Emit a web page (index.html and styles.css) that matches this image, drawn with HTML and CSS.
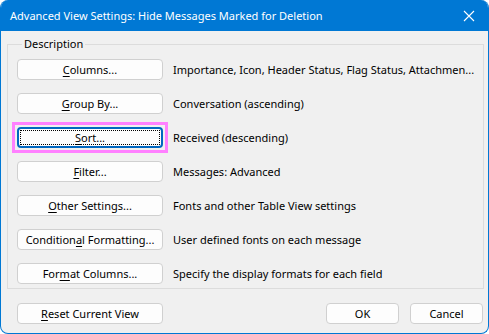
FILE: index.html
```html
<!DOCTYPE html>
<html>
<head>
<meta charset="utf-8">
<link rel="stylesheet" href="styles.css">
</head>
<body>
<div class="window">
  <div class="titlebar">
    <span class="title">Advanced View Settings: Hide Messages Marked for Deletion</span>
    <svg class="close" width="12" height="12" viewBox="0 0 12 12"><path d="M1 1 L11 11 M11 1 L1 11" stroke="#fff" stroke-width="1.1" fill="none"/></svg>
  </div>
  <div class="content">
    <fieldset class="group">
      <legend class="legend">Description</legend>
      <div class="row"><button class="btn"><u>C</u>olumns...</button><span class="desc">Importance, Icon, Header Status, Flag Status, Attachmen...</span></div>
      <div class="row"><button class="btn"><u>G</u>roup By...</button><span class="desc">Conversation (ascending)</span></div>
      <div class="row"><span class="highlight"><button class="btn focused"><span class="focusring"><u>S</u>ort...</span></button></span><span class="desc">Received (descending)</span></div>
      <div class="row"><button class="btn"><u>F</u>ilter...</button><span class="desc">Messages: Advanced</span></div>
      <div class="row"><button class="btn"><u>O</u>ther Settings...</button><span class="desc">Fonts and other Table View settings</span></div>
      <div class="row"><button class="btn">Condition<u>a</u>l Formatting...</button><span class="desc">User defined fonts on each message</span></div>
      <div class="row"><button class="btn">For<u>m</u>at Columns...</button><span class="desc">Specify the display formats for each field</span></div>
    </fieldset>
    <div class="footer">
      <button class="btn"><u>R</u>eset Current View</button>
      <div class="spacer"></div>
      <button class="btn small">OK</button>
      <button class="btn small">Cancel</button>
    </div>
  </div>
</div>
</body>
</html>
```
FILE: styles.css
```css
html, body {
  margin: 0;
  padding: 0;
  background: #ffffff;
}
.window {
  width: 489px;
  height: 334px;
  box-sizing: border-box;
  border: 1px solid #0078d4;
  border-top: none;
  border-radius: 8px;
  background: #f0f0f0;
  overflow: hidden;
  font-family: "Noto Sans", "Segoe UI", sans-serif;
  font-size: 11px;
  color: #000;
}
.titlebar {
  height: 31px;
  background: #0078d4;
  display: flex;
  align-items: center;
  padding: 0 10px 0 9px;
  color: #fff;
}
.title {
  flex: 1;
  font-size: 11px;
  padding-bottom: 1px;
}
.close {
  margin-right: 3px;
}
.content {
  padding: 5px 5px 0 6px;
}
.group {
  margin: 0;
  border: 1px solid #dcdcdc;
  padding: 7px 9px 4px 9px;
  display: flex;
  flex-direction: column;
  gap: 13px;
}
.legend {
  padding: 0 2px;
  margin-left: 5px;
  line-height: 16px;
}
.row {
  display: flex;
  align-items: center;
  height: 21px;
}
.btn {
  width: 146px;
  height: 21px;
  box-sizing: border-box;
  background: #fdfdfd;
  border: 1px solid #d0d0d0;
  border-radius: 4px;
  font-family: inherit;
  font-size: 11px;
  color: #000;
  padding: 0;
  display: flex;
  align-items: center;
  justify-content: center;
  line-height: 15px;
}
.btn u {
  text-underline-offset: 2px;
}
.desc {
  margin-left: 10px;
  white-space: nowrap;
}
.highlight {
  display: flex;
  margin: -5px;
  padding: 2px;
  border: 3px solid #ff80ff;
}
.btn.focused {
  border: 2px solid #0067c0;
  padding: 1px;
}
.focusring {
  flex: 1;
  align-self: stretch;
  border: 1px dotted #000;
  display: flex;
  align-items: center;
  justify-content: center;
}
.footer {
  display: flex;
  margin-top: 14px;
  padding-left: 10px;
  gap: 11px;
}
.spacer {
  flex: 1;
}
.btn.small {
  width: 73px;
}
```
